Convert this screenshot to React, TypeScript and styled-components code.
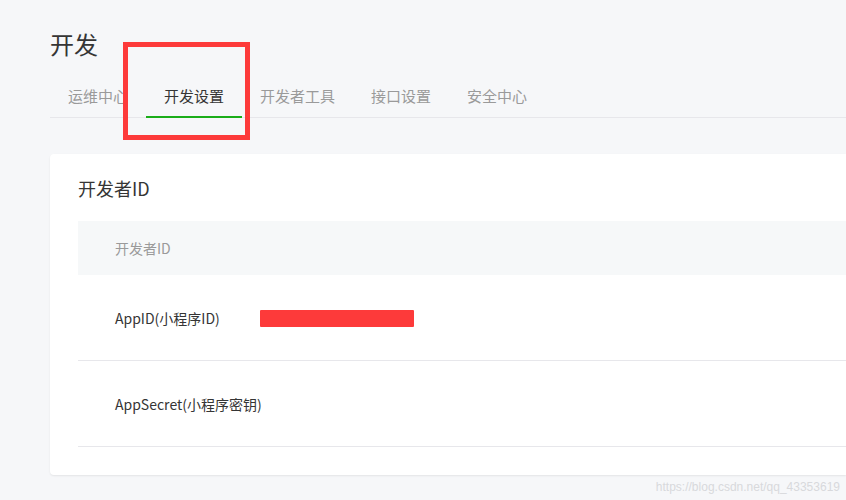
import styled, { createGlobalStyle } from "styled-components";

const GlobalStyle = createGlobalStyle`
  html, body {
    margin: 0;
    padding: 0;
    background: #f6f7f9;
    font-family: "Noto Sans CJK SC", "Liberation Sans", sans-serif;
    color: #353535;
  }
`;

const Page = styled.div`
  position: relative;
  width: 846px;
  height: 500px;
  overflow: hidden;
  padding-left: 50px;
  box-sizing: border-box;
`;

const Title = styled.h1`
  margin: 0;
  padding-top: 25px;
  height: 38px;
  font-size: 24px;
  font-weight: 400;
  line-height: 38px;
  color: #353535;
`;

const TabBar = styled.nav`
  display: flex;
  margin-top: 17px;
  border-bottom: 1px solid #e7e7eb;
`;

const Tab = styled.div<{ $active?: boolean }>`
  padding: 0 18px;
  height: 38px;
  box-sizing: border-box;
  line-height: 32px;
  font-size: 15px;
  color: ${(p) => (p.$active ? "#353535" : "#9a9a9a")};
  border-bottom: 2px solid ${(p) => (p.$active ? "#1aad19" : "transparent")};
  margin-bottom: -1px;
  white-space: nowrap;
`;

const Highlight = styled.div`
  position: absolute;
  left: 123px;
  top: 42px;
  width: 127px;
  height: 98px;
  box-sizing: border-box;
  border: 5px solid #fd3a3a;
  pointer-events: none;
`;

const Card = styled.section`
  margin-top: 36px;
  background: #fff;
  border-radius: 4px 0 0 4px;
  box-shadow: 0 1px 2px rgba(0, 0, 0, 0.08);
  padding: 18px 0 28px 28px;
`;

const CardTitle = styled.h2`
  margin: 0;
  font-size: 18px;
  font-weight: 400;
  line-height: 32px;
  color: #353535;
`;

const Table = styled.div`
  margin-top: 17px;
`;

const HeadRow = styled.div`
  height: 54px;
  display: flex;
  align-items: center;
  padding-left: 37px;
  background: #f6f8f9;
  font-size: 14px;
  color: #9a9a9a;
`;

const Row = styled.div`
  height: 86px;
  box-sizing: border-box;
  display: flex;
  align-items: center;
  padding-left: 37px;
  border-bottom: 1px solid #e7e7eb;
  font-size: 14px;
  color: #353535;
`;

const Label = styled.span`
  width: 144px;
  flex: none;
  white-space: nowrap;
`;

const Redacted = styled.span`
  display: inline-block;
  width: 154px;
  height: 17px;
  margin-left: 1px;
  margin-top: 1px;
  background: #fd3a3a;
  border-radius: 1px;
`;

const Watermark = styled.div`
  position: absolute;
  right: 6px;
  bottom: 6px;
  font-family: "Liberation Sans", Arial, sans-serif;
  font-size: 12px;
  color: #d8d9dc;
`;

const tabs = ["运维中心", "开发设置", "开发者工具", "接口设置", "安全中心"];

export default function App() {
  return (
    <>
      <GlobalStyle />
      <Page>
        <Title>开发</Title>
        <TabBar>
          {tabs.map((t) => (
            <Tab key={t} $active={t === "开发设置"}>
              {t}
            </Tab>
          ))}
        </TabBar>
        <Card>
          <CardTitle>开发者ID</CardTitle>
          <Table>
            <HeadRow>开发者ID</HeadRow>
            <Row>
              <Label>AppID(小程序ID)</Label>
              <Redacted />
            </Row>
            <Row>
              <Label>AppSecret(小程序密钥)</Label>
            </Row>
          </Table>
        </Card>
        <Highlight />
        <Watermark>https://blog.csdn.net/qq_43353619</Watermark>
      </Page>
    </>
  );
}
